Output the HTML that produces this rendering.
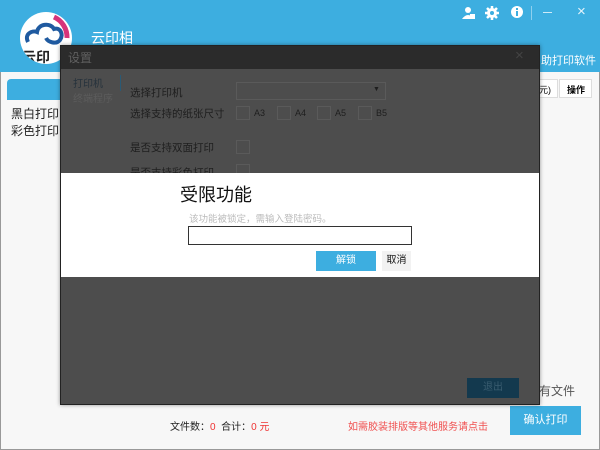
<!DOCTYPE html>
<html><head><meta charset="utf-8"><style>
*{margin:0;padding:0;box-sizing:border-box}
body{width:600px;height:450px;position:relative;overflow:hidden;background:#f7f7f7;font-family:"Liberation Sans","Noto Sans CJK SC",sans-serif;}
.a{position:absolute}
.cb{position:absolute;width:14px;height:14px;border:1px solid #5a5a5a}
.l{position:absolute;font-size:9px;color:#1e1e1e}
</style></head><body>
<div class="a" style="left:0;top:0;width:600px;height:450px;border:1px solid #999"></div>
<div class="a" style="left:0;top:0;width:600px;height:72px;background:#3daee0"></div>
<div class="a" style="left:20px;top:12px;width:52px;height:52px;border-radius:50%;background:#fff;overflow:hidden">
<svg width="52" height="52" viewBox="0 0 52 52"><path d="M34 5 A22 22 0 0 1 47 26" stroke="#d6337a" stroke-width="5" fill="none"/><path d="M8 30 C4 22 12 18 17 20 C18 12 30 10 34 17 C40 15 44 22 40 28 C36 33 28 30 26 26" stroke="#1f5aa0" stroke-width="4" fill="none"/><text x="2" y="50" font-size="14" font-weight="bold" fill="#222">云印</text></svg></div>
<div class="a" style="left:91px;top:28px;color:#fff;font-size:14px">云印相</div>
<div class="a" style="left:541px;top:52px;color:#fff;font-size:11px">助打印软件</div>
<svg class="a" style="left:460px;top:5px" width="70" height="16"><circle cx="8" cy="5" r="3" fill="#fff"/><path d="M2 14 Q8 6 14 14Z" fill="#fff"/><rect x="10" y="9" width="5" height="5" fill="#fff"/><g transform="translate(25,1)"><circle cx="7" cy="7" r="5" fill="#fff"/><path d="M7 0V14M0 7H14M2 2L12 12M12 2L2 12" stroke="#fff" stroke-width="2.5"/><circle cx="7" cy="7" r="2" fill="#3daee0"/></g><circle cx="57" cy="7" r="6" fill="#fff"/><rect x="56" y="6" width="2" height="5" fill="#3daee0"/><rect x="56" y="3" width="2" height="2" fill="#3daee0"/></svg>
<div class="a" style="left:531px;top:6px;width:1px;height:14px;background:#8fd0ee"></div>
<div class="a" style="left:543px;top:12px;width:9px;height:1px;background:#cfeaf7"></div>
<div class="a" style="left:577px;top:3px;color:#e6f4fb;font-size:15px">×</div>
<div class="a" style="left:7px;top:79px;width:60px;height:21px;background:#3daee0;border-radius:4px 4px 0 0"></div>
<div class="a" style="left:11px;top:106px;font-size:12px;color:#222;line-height:17px">黑白打印<br>彩色打印</div>
<div class="a" style="left:530px;top:79px;width:28px;height:19px;background:#fff;border:1px solid #ddd;font-size:9px;padding:3px 0 0 8px">元)</div>
<div class="a" style="left:559px;top:79px;width:33px;height:19px;background:#fff;border:1px solid #ddd;font-size:9px;padding:3px 0 0 7px;font-weight:bold">操作</div>
<div class="a" style="left:539px;top:382px;font-size:12px;color:#555">有文件</div>
<div class="a" style="left:170px;top:418px;font-size:10px;color:#222">文件数：<span style="color:#e33">0</span> &nbsp;合计：<span style="color:#e33">0 元</span></div>
<div class="a" style="left:348px;top:418px;font-size:10px;color:#f05050">如需胶装排版等其他服务请点击</div>
<div class="a" style="left:510px;top:406px;width:71px;height:29px;background:#3daee0;color:#fff;font-size:11px;text-align:center;line-height:29px">确认打印</div>
<!-- dialog -->
<div class="a" style="left:60px;top:45px;width:480px;height:360px;background:#4d4d4d;border:1px solid #222;box-shadow:0 0 4px rgba(0,0,0,.4)"></div>
<div class="a" style="left:61px;top:46px;width:478px;height:23px;background:#2b2b2b"></div>
<div class="a" style="left:68px;top:49px;color:#606060;font-size:12px">设置</div>
<div class="a" style="left:515px;top:47px;color:#444;font-size:15px">×</div>
<div class="a" style="left:73px;top:77px;color:#26323c;font-size:10px;line-height:15px">打印机<br><span style="color:#5c5c5c">终端程序</span></div>
<div class="a" style="left:120px;top:75px;width:1px;height:16px;background:#2a5a75"></div>
<div class="a" style="left:130px;top:85px;color:#1e1e1e;font-size:10.5px">选择打印机</div>
<div class="a" style="left:130px;top:106px;color:#1e1e1e;font-size:10.5px">选择支持的纸张尺寸</div>
<div class="a" style="left:130px;top:140px;color:#1e1e1e;font-size:10.5px">是否支持双面打印</div>
<div class="a" style="left:130px;top:165px;color:#1e1e1e;font-size:10.5px">是否支持彩色打印</div>
<div class="a" style="left:236px;top:82px;width:150px;height:18px;border:1px solid #5a5a5a"></div>
<div class="a" style="left:373px;top:86px;font-size:7px;color:#1e1e1e">▼</div>
<div class="cb" style="left:236px;top:106px"></div><div class="l" style="left:254px;top:108px">A3</div>
<div class="cb" style="left:277px;top:106px"></div><div class="l" style="left:295px;top:108px">A4</div>
<div class="cb" style="left:317px;top:106px"></div><div class="l" style="left:335px;top:108px">A5</div>
<div class="cb" style="left:358px;top:106px"></div><div class="l" style="left:376px;top:108px">B5</div>
<div class="cb" style="left:236px;top:140px"></div>
<div class="a" style="left:236px;top:164px;width:14px;height:9px;border:1px solid #5a5a5a;border-bottom:0"></div>
<div class="a" style="left:467px;top:378px;width:52px;height:20px;background:#13394e;color:#3a5d70;font-size:10px;text-align:center;line-height:20px">退出</div>
<!-- white band -->
<div class="a" style="left:61px;top:173px;width:478px;height:104px;background:#fff"></div>
<div class="a" style="left:180px;top:181px;font-size:18px;color:#111">受限功能</div>
<div class="a" style="left:189px;top:211px;font-size:9.5px;color:#bbb">该功能被锁定，需输入登陆密码。</div>
<div class="a" style="left:188px;top:226px;width:224px;height:19px;border:1px solid #333"></div>
<div class="a" style="left:316px;top:251px;width:60px;height:20px;background:#3daee0;color:#fff;font-size:10px;text-align:center;line-height:20px">解锁</div>
<div class="a" style="left:382px;top:251px;width:29px;height:20px;background:#f2f2f2;color:#111;font-size:10px;text-align:center;line-height:20px">取消</div>
</body></html>
